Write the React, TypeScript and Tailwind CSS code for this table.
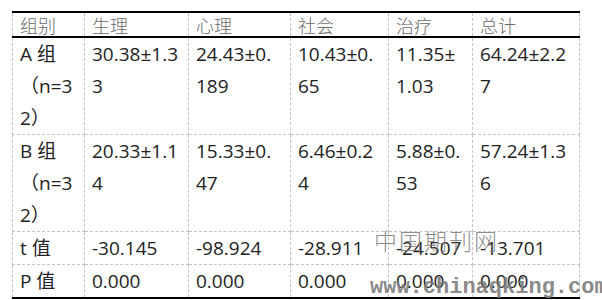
import React from "react";

const header = ["组别", "生理", "心理", "社会", "治疗", "总计"];
const rows: string[][][] = [
  [["A 组", "（n=3", "2）"], ["30.38±1.3", "3"], ["24.43±0.", "189"], ["10.43±0.", "65"], ["11.35±", "1.03"], ["64.24±2.2", "7"]],
  [["B 组", "（n=3", "2）"], ["20.33±1.1", "4"], ["15.33±0.", "47"], ["6.46±0.2", "4"], ["5.88±0.", "53"], ["57.24±1.3", "6"]],
  [["t 值"], ["-30.145"], ["-98.924"], ["-28.911"], ["-24.507"], ["-13.701"]],
  [["P 值"], ["0.000"], ["0.000"], ["0.000"], ["0.000"], ["0.000"]],
];
const colClasses = ["w-[72px]", "w-[104px]", "w-[102px]", "w-[98px]", "w-[84px]", "w-[107px]"];

export default function App() {
  return (
    <div className="relative w-[602px] h-[300px] bg-white overflow-hidden font-['Open_Sans','Noto_Sans_CJK_SC',sans-serif]">
      <div className="pt-[11px] pl-[12px]">
        <table className="table-fixed border-collapse w-[567px] text-[19px] text-[#222]">
          <colgroup>
            {colClasses.map((c, i) => (
              <col key={i} className={c} />
            ))}
          </colgroup>
          <thead>
            <tr className="h-[25px]">
              {header.map((h, i) => (
                <th
                  key={i}
                  className="border border-dashed border-[#c4c4c4] border-t-2 border-t-black [border-top-style:solid] border-b-2 border-b-black [border-bottom-style:solid] text-left font-light text-[#6a6a6a] text-[18px] leading-[22px] pl-[7px] pr-[2px] py-0 align-middle font-['Noto_Sans_CJK_SC',sans-serif]"
                >
                  {h}
                </th>
              ))}
            </tr>
          </thead>
          <tbody>
            {rows.map((r, ri) => (
              <tr key={ri}>
                {r.map((lines, ci) => (
                  <td
                    key={ci}
                    className={
                      ri === rows.length - 1
                        ? "border border-dashed border-[#c4c4c4] border-b-2 border-b-black [border-bottom-style:solid] align-top pl-[7px] pr-[2px] py-0 leading-[32px] whitespace-nowrap"
                        : "border border-dashed border-[#c4c4c4] align-top pl-[7px] pr-[2px] py-0 leading-[32px] whitespace-nowrap"
                    }
                  >
                    <div className={ri < 2 ? "h-[96px]" : ""}>
                      {lines.map((l, li) => (
                        <div key={li}>{l}</div>
                      ))}
                    </div>
                  </td>
                ))}
              </tr>
            ))}
          </tbody>
        </table>
      </div>
      <div className="absolute left-[374px] top-[227px] text-[23px] leading-[26px] tracking-[2px] text-[#808080]/90 font-light font-['Noto_Sans_CJK_SC',serif]">
        中国期刊网
      </div>
      <div className="absolute left-[370px] top-[277px] text-[22px] leading-[22px] text-[#7a7a7a]/90 font-bold font-['Liberation_Mono',monospace]">
        www.chinaqking.com
      </div>
    </div>
  );
}
